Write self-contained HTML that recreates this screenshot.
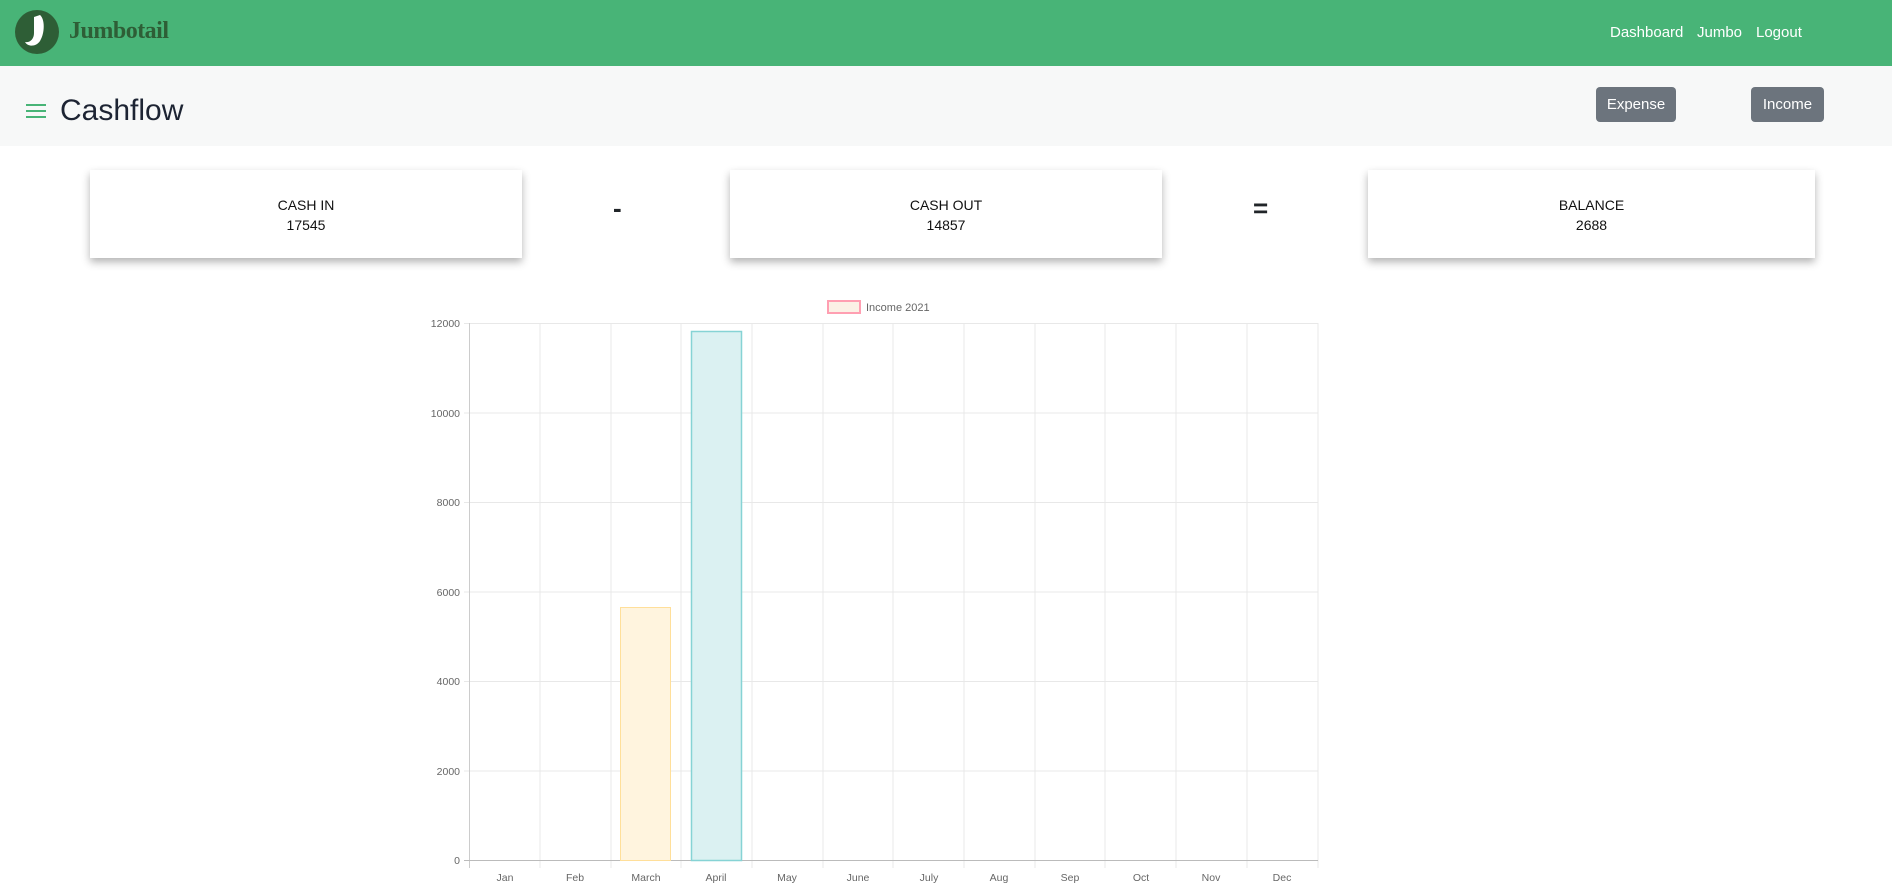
<!DOCTYPE html>
<html><head><meta charset="utf-8"><style>
*{margin:0;padding:0;box-sizing:border-box}
body{width:1892px;height:888px;overflow:hidden;background:#fff;font-family:"Liberation Sans",sans-serif;color:#212529;position:relative}
.nav{position:absolute;left:0;top:0;width:1892px;height:66px;background:#48b477}
.brand{position:absolute;left:69px;top:18px;font-family:"Liberation Serif",serif;font-weight:bold;font-size:24px;color:#2e5e36;letter-spacing:-0.5px}
.links{position:absolute;top:24px;font-size:15px;color:#fff}
.sub{position:absolute;left:0;top:66px;width:1892px;height:80px;background:#f7f8f8}
.title{position:absolute;left:60px;top:94px;font-size:30px;color:#1d2433}
.btn{position:absolute;top:87px;height:35px;background:#6c747d;color:#fff;border-radius:4px;font-size:15px;text-align:center;line-height:36px}
.card{position:absolute;top:170px;height:88px;background:#fff;box-shadow:0 4px 8px rgba(0,0,0,.3);text-align:center;font-size:14px;color:#111}
.card .l{margin-top:27px}
.card .v{margin-top:4px}
.op{position:absolute;top:193px;font-size:26px;font-weight:bold}
</style></head><body>
<div class="nav">
<svg style="position:absolute;left:14px;top:9px" width="46" height="46" viewBox="0 0 46 46"><circle cx="23" cy="23" r="22" fill="#2e5e36"/><path d="M26 6 C31 10 31 24 26 32 C22 38 14 38 11 33 C16 34 20 30 20 24 L20 8 Z" fill="#fff"/></svg>
<div class="brand">Jumbotail</div>
<div class="links" style="left:1610px">Dashboard</div>
<div class="links" style="left:1697px">Jumbo</div>
<div class="links" style="left:1756px">Logout</div>
</div>
<div class="sub">
<svg style="position:absolute;left:26px;top:37px" width="20" height="16"><rect y="1" width="20" height="2" fill="#48b477"/><rect y="7" width="20" height="2" fill="#48b477"/><rect y="13" width="20" height="2" fill="#48b477"/></svg>
</div>
<div class="title">Cashflow</div>
<div class="btn" style="left:1596px;width:80px">Expense</div>
<div class="btn" style="left:1751px;width:73px">Income</div>
<div class="card" style="left:90px;width:432px"><div class="l">CASH IN</div><div class="v">17545</div></div>
<div class="op" style="left:613px">-</div>
<div class="card" style="left:730px;width:432px"><div class="l">CASH OUT</div><div class="v">14857</div></div>
<div class="op" style="left:1253px">=</div>
<div class="card" style="left:1368px;width:447px"><div class="l">BALANCE</div><div class="v">2688</div></div>
<svg style="position:absolute;left:0;top:0" width="1892" height="888" font-family="Liberation Sans, sans-serif" font-size="11" fill="#666">
<rect x="828" y="301" width="32" height="12" fill="#fbf1e6" stroke="#ff9fb2" stroke-width="2"/>
<text x="866" y="311">Income 2021</text>
<g stroke="#e8e8e8" stroke-width="1">
<line x1="464" y1="323.5" x2="1318" y2="323.5"/><line x1="464" y1="413" x2="1318" y2="413"/><line x1="464" y1="502.5" x2="1318" y2="502.5"/><line x1="464" y1="592" x2="1318" y2="592"/><line x1="464" y1="681.5" x2="1318" y2="681.5"/><line x1="464" y1="771" x2="1318" y2="771"/>
<line x1="540" y1="323" x2="540" y2="868"/><line x1="611" y1="323" x2="611" y2="868"/><line x1="681" y1="323" x2="681" y2="868"/><line x1="752" y1="323" x2="752" y2="868"/><line x1="823" y1="323" x2="823" y2="868"/><line x1="893" y1="323" x2="893" y2="868"/><line x1="964" y1="323" x2="964" y2="868"/><line x1="1035" y1="323" x2="1035" y2="868"/><line x1="1105" y1="323" x2="1105" y2="868"/><line x1="1176" y1="323" x2="1176" y2="868"/><line x1="1247" y1="323" x2="1247" y2="868"/><line x1="1318" y1="323" x2="1318" y2="868"/>
</g>
<line x1="469.5" y1="323" x2="469.5" y2="868" stroke="#ccc"/>
<line x1="464" y1="860.5" x2="1318" y2="860.5" stroke="#bbb"/>
<rect x="620.5" y="607.5" width="50" height="253" fill="#fff4de" stroke="#ffdf9a"/>
<rect x="691.5" y="331.5" width="50" height="529" fill="#dbf1f2" stroke="#86d3d5" stroke-width="1.5"/>
<g text-anchor="end" font-size="10.5"><text x="460" y="327">12000</text><text x="460" y="417">10000</text><text x="460" y="506">8000</text><text x="460" y="596">6000</text><text x="460" y="685">4000</text><text x="460" y="775">2000</text><text x="460" y="864">0</text></g>
<g text-anchor="middle" font-size="10.5"><text x="505" y="881">Jan</text><text x="575" y="881">Feb</text><text x="646" y="881">March</text><text x="716" y="881">April</text><text x="787" y="881">May</text><text x="858" y="881">June</text><text x="929" y="881">July</text><text x="999" y="881">Aug</text><text x="1070" y="881">Sep</text><text x="1141" y="881">Oct</text><text x="1211" y="881">Nov</text><text x="1282" y="881">Dec</text></g>
</svg>
</body></html>
